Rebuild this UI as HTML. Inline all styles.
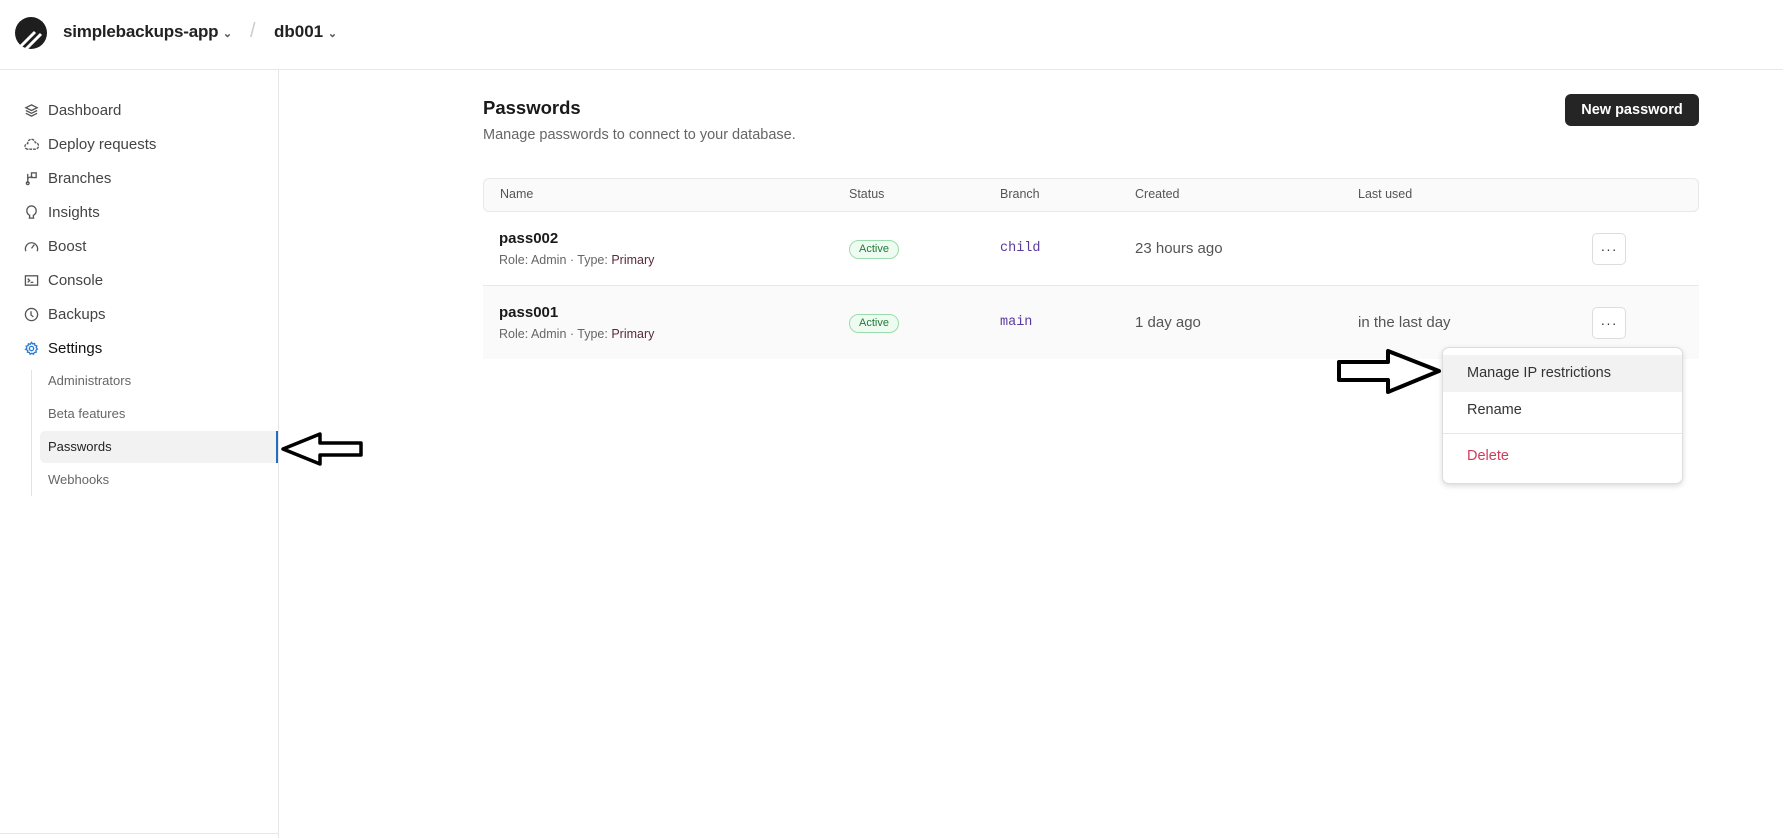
<!DOCTYPE html>
<html><head><meta charset="utf-8"><style>
*{box-sizing:border-box;margin:0;padding:0}
body{width:1783px;height:838px;background:#fff;font-family:"Liberation Sans",sans-serif;color:#222;position:relative;overflow:hidden}
.a{position:absolute;white-space:nowrap}
.nav{position:absolute;left:24px;font-size:15px;color:#444;display:flex;align-items:center;height:20px}
.nav svg{width:15px;height:15px;margin-right:9px;stroke:#555;fill:none;stroke-width:1.4}
.sub{position:absolute;left:48px;font-size:13px;color:#666}
.th{position:absolute;top:187px;font-size:12.5px;color:#555}
.dots{position:absolute;left:1592px;width:34px;height:32px;border:1px solid #ddd;border-radius:5px;background:#fff;text-align:center;font-size:14px;line-height:30px;color:#333;letter-spacing:1px}
.badge{position:absolute;left:849px;width:50px;height:19px;border:1px solid #9bdcac;background:#eefbf1;border-radius:10px;color:#217a3a;font-size:11px;text-align:center;line-height:17px}
.br{position:absolute;left:1000px;font-family:"Liberation Mono",monospace;font-size:13.5px;color:#5b3a9e}
.cell{position:absolute;font-size:15px;color:#555}
</style></head><body>
<svg class="a" style="left:15px;top:17px" width="32" height="32" viewBox="0 0 32 32"><circle cx="16" cy="16" r="16" fill="#1e1e1e"/><path d="M5 30 L20 15 M11 32 L26 17" stroke="#fff" stroke-width="3"/></svg>
<div class="a" style="left:63px;top:22px;font-size:17px;font-weight:600;color:#222;letter-spacing:-0.2px">simplebackups-app <span style="font-size:11px;color:#555">&#8964;</span></div>
<div class="a" style="left:250px;top:20px;font-size:20px;color:#ccc">/</div>
<div class="a" style="left:274px;top:22px;font-size:17px;font-weight:600;color:#222">db001 <span style="font-size:11px;color:#555">&#8964;</span></div>
<div class="a" style="left:0;top:69px;width:1783px;height:1px;background:#e8e8e8"></div>
<div class="a" style="left:278px;top:70px;width:1px;height:768px;background:#e6e6e6"></div>
<div class="a" style="left:0;top:833px;width:278px;height:1px;background:#e6e6e6"></div>
<div class="nav" style="top:100px"><svg viewBox="0 0 16 16"><path d="M8 2l6 3-6 3-6-3z M2 8l6 3 6-3 M2 11l6 3 6-3"/></svg>Dashboard</div>
<div class="nav" style="top:134px"><svg viewBox="0 0 16 16"><path d="M4 13a3 3 0 010-6 4 4 0 018-1 3.5 3.5 0 010 7z" stroke-dasharray="3 1"/></svg>Deploy requests</div>
<div class="nav" style="top:168px"><svg viewBox="0 0 16 16"><rect x="8" y="2" width="5" height="5"/><path d="M4 3v10 M4 9c0-3 3-2 5-3"/><circle cx="4" cy="13" r="1.5"/></svg>Branches</div>
<div class="nav" style="top:202px"><svg viewBox="0 0 16 16"><path d="M5 14h6 M6 14v-3c-2-1-3-3-3-5a5 5 0 0110 0c0 2-1 4-3 5v3"/></svg>Insights</div>
<div class="nav" style="top:236px"><svg viewBox="0 0 16 16"><path d="M2 13a6.5 6.5 0 1112 0 M8 10l3-4"/></svg>Boost</div>
<div class="nav" style="top:270px"><svg viewBox="0 0 16 16"><rect x="1.5" y="3" width="13" height="10"/><path d="M4 6l2 2-2 2 M7 10h3"/></svg>Console</div>
<div class="nav" style="top:304px"><svg viewBox="0 0 16 16"><circle cx="8" cy="8" r="6.5"/><path d="M7.5 4.5v4l2.5 2"/></svg>Backups</div>
<div class="nav" style="top:338px;color:#111"><svg viewBox="0 0 16 16" style="stroke:#2a7bd6"><circle cx="8" cy="8" r="2.3"/><path d="M8 1.5l1.3 1.6 2-.5.4 2 2 .6-.7 1.9 1.3 1.5-1.6 1.3.3 2-2 .3-.8 1.9-1.8-1-1.9 1-.8-1.9-2-.3.3-2L1.7 9l1.3-1.5-.7-1.9 2-.6.4-2 2 .5z"/></svg>Settings</div>
<div class="a" style="left:31px;top:370px;width:1px;height:126px;background:#e3e3e3"></div>
<div class="sub" style="top:373px">Administrators</div>
<div class="sub" style="top:406px">Beta features</div>
<div class="a" style="left:40px;top:431px;width:237px;height:32px;background:#f2f2f2;border-radius:5px 0 0 5px"></div>
<div class="a" style="left:276px;top:431px;width:2px;height:32px;background:#1f6fc7"></div>
<div class="sub" style="top:439px;color:#222">Passwords</div>
<div class="sub" style="top:472px">Webhooks</div>
<svg class="a" style="left:280px;top:430px" width="86" height="38" viewBox="0 0 86 38"><path d="M3 19 L40 4 L40 13 L81 13 L81 25 L40 25 L40 34 Z" fill="#fff" stroke="#000" stroke-width="3.5" stroke-linejoin="round"/></svg>
<div class="a" style="left:483px;top:97px;font-size:18.5px;font-weight:600;color:#1a1a1a">Passwords</div>
<div class="a" style="left:483px;top:127px;font-size:14.5px;color:#666">Manage passwords to connect to your database.</div>
<div class="a" style="left:1565px;top:94px;width:134px;height:32px;background:#252525;border-radius:6px;color:#fff;font-weight:700;font-size:14.5px;text-align:center;line-height:32px">New password</div>
<div class="a" style="left:483px;top:178px;width:1216px;height:34px;background:#fafafa;border:1px solid #e8e8e8;border-radius:6px"></div>
<div class="th" style="left:500px">Name</div>
<div class="th" style="left:849px">Status</div>
<div class="th" style="left:1000px">Branch</div>
<div class="th" style="left:1135px">Created</div>
<div class="th" style="left:1358px">Last used</div>
<div class="a" style="left:483px;top:285px;width:1216px;height:1px;background:#e8e8e8"></div>
<div class="a" style="left:483px;top:286px;width:1216px;height:73px;background:#fafafa"></div>
<div class="a" style="left:499px;top:230px;font-size:15px;font-weight:600;color:#1a1a1a">pass002</div>
<div class="a" style="left:499px;top:253px;font-size:12.5px;color:#666">Role: Admin · Type: <span style="color:#5a2a3a">Primary</span></div>
<div class="badge" style="top:240px">Active</div>
<div class="br" style="top:241px">child</div>
<div class="cell" style="left:1135px;top:240px">23 hours ago</div>
<div class="dots" style="top:233px">···</div>
<div class="a" style="left:499px;top:304px;font-size:15px;font-weight:600;color:#1a1a1a">pass001</div>
<div class="a" style="left:499px;top:327px;font-size:12.5px;color:#666">Role: Admin · Type: <span style="color:#5a2a3a">Primary</span></div>
<div class="badge" style="top:314px">Active</div>
<div class="br" style="top:315px">main</div>
<div class="cell" style="left:1135px;top:314px">1 day ago</div>
<div class="cell" style="left:1358px;top:314px">in the last day</div>
<div class="dots" style="top:307px">···</div>
<div class="a" style="left:1442px;top:347px;width:241px;height:137px;background:#fff;border:1px solid #ddd;border-radius:7px;box-shadow:0 2px 6px rgba(0,0,0,.15)"></div>
<div class="a" style="left:1443px;top:355px;width:239px;height:37px;background:#f2f2f2"></div>
<div class="a" style="left:1467px;top:365px;font-size:14.5px;color:#333">Manage IP restrictions</div>
<div class="a" style="left:1467px;top:402px;font-size:14.5px;color:#333">Rename</div>
<div class="a" style="left:1443px;top:433px;width:239px;height:1px;background:#e6e6e6"></div>
<div class="a" style="left:1467px;top:448px;font-size:14.5px;color:#d23a5a">Delete</div>
<svg class="a" style="left:1335px;top:346px" width="108" height="52" viewBox="0 0 108 52"><path d="M104 25 L53 5 L53 16 L4 16 L4 34 L53 34 L53 46 Z" fill="#fff" stroke="#000" stroke-width="4" stroke-linejoin="round"/></svg>
</body></html>
